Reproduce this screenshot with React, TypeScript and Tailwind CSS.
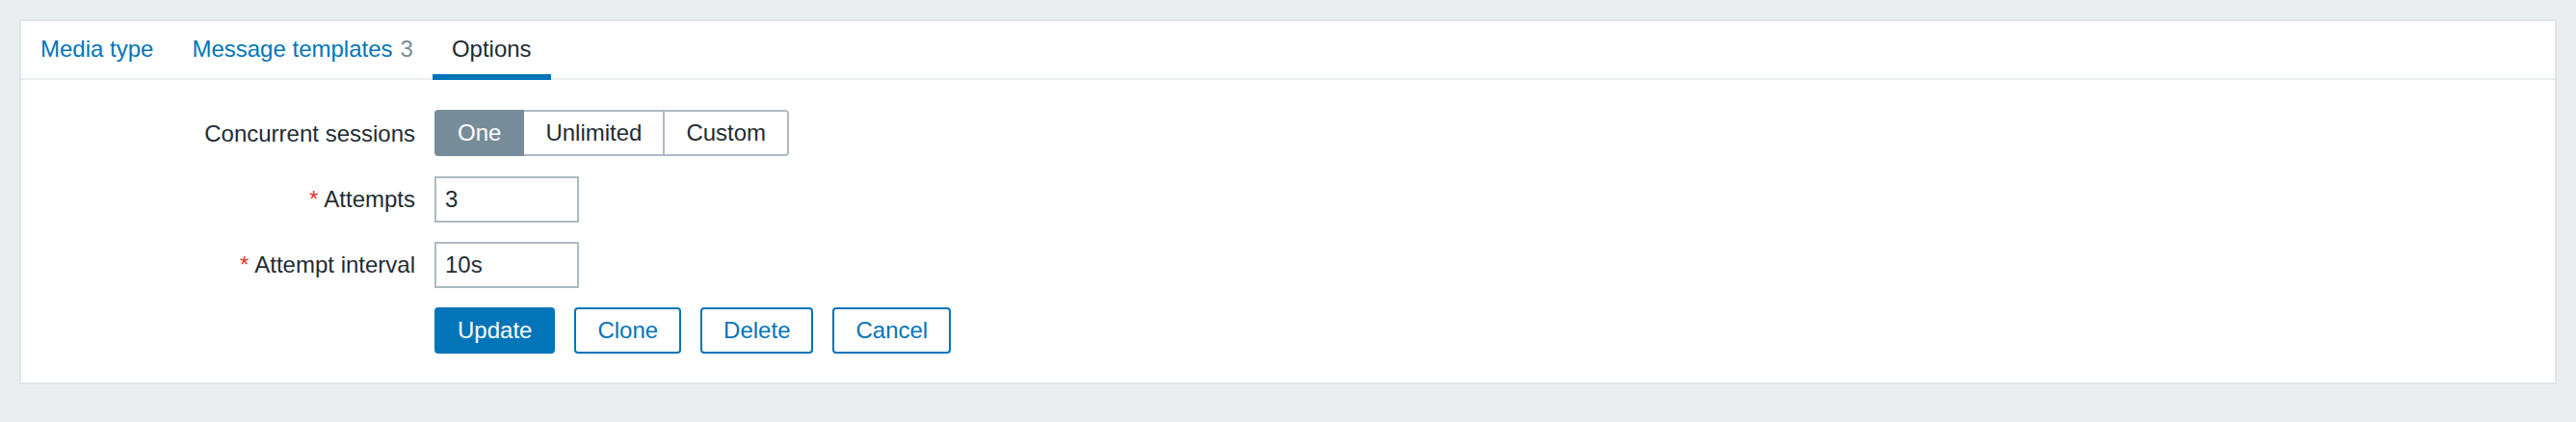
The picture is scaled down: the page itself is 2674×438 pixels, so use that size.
const tabs = [
  { name: "Media type", count: null as number | null, active: false },
  { name: "Message templates", count: 3, active: false },
  { name: "Options", count: null as number | null, active: true },
];

const sessionOptions = ["One", "Unlimited", "Custom"];

function Label({ text, required }: { text: string; required?: boolean }) {
  return (
    <div className="flex items-center justify-end text-[#1f2c33]">
      {required && <span className="text-[#e33734] mr-[6px]">*</span>}
      <span>{text}</span>
    </div>
  );
}

function TextInput({ value }: { value: string }) {
  return (
    <input
      type="text"
      defaultValue={value}
      className="w-[150px] h-[48px] border-2 border-[#acbbc2] bg-white px-[9px] text-[24px] text-[#1f2c33] outline-none"
    />
  );
}

export default function App() {
  const selected = "One";

  return (
    <div className="w-[2674px] h-[438px] bg-[#ebeef0] p-[20px] font-['Liberation_Sans',Arial,sans-serif] text-[24px] leading-[28px]">
      <div className="bg-white border-2 border-[#dfe4e7]">
        {/* tabs */}
        <ul className="flex border-b-2 border-[#ebeef0]">
          {tabs.map((tab) =>
            tab.active ? (
              <li
                key={tab.name}
                className="px-[20px] pt-[15px] pb-[12px] border-b-[6px] border-[#0275b8] -mb-[2px] text-[#1f2c33]"
              >
                {tab.name}
              </li>
            ) : (
              <li key={tab.name} className="px-[20px] pt-[15px]">
                <a className="text-[#0275b8] cursor-pointer">{tab.name}</a>
                {tab.count !== null && (
                  <span className="ml-[8px] text-[#768d99]">{tab.count}</span>
                )}
              </li>
            )
          )}
        </ul>

        {/* form */}
        <div className="grid grid-cols-[409px_auto] justify-start gap-x-[20px] gap-y-[20px] pt-[31px] pb-[30px]">
          <Label text="Concurrent sessions" />
          <div className="flex mb-[1px]">
            {sessionOptions.map((opt, i) => (
              <label
                key={opt}
                className={
                  "h-[48px] px-[22px] border-2 leading-[44px] cursor-pointer " +
                  (i > 0 ? "border-l-0 " : "rounded-l-[4px] ") +
                  (i === sessionOptions.length - 1 ? "rounded-r-[4px] " : "") +
                  (opt === selected
                    ? "bg-[#768d99] border-[#768d99] text-white"
                    : "bg-white border-[#acbbc2] text-[#1f2c33]")
                }
              >
                {opt}
              </label>
            ))}
          </div>

          <Label text="Attempts" required />
          <div>
            <TextInput value="3" />
          </div>

          <Label text="Attempt interval" required />
          <div>
            <TextInput value="10s" />
          </div>

          <div />
          <div className="flex gap-[20px]">
            <button className="h-[48px] px-[22px] border-2 border-[#0275b8] bg-[#0275b8] text-white rounded-[4px]">
              Update
            </button>
            {["Clone", "Delete", "Cancel"].map((b) => (
              <button
                key={b}
                className="h-[48px] px-[22px] border-2 border-[#0275b8] bg-white text-[#0275b8] rounded-[4px]"
              >
                {b}
              </button>
            ))}
          </div>
        </div>
      </div>
    </div>
  );
}
